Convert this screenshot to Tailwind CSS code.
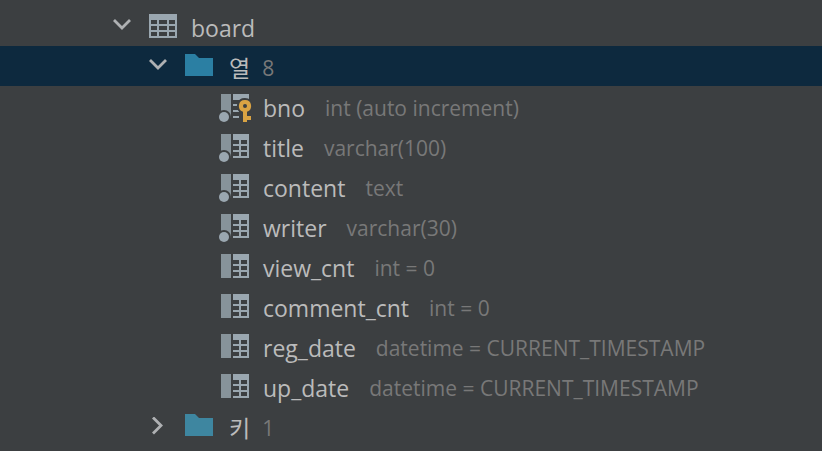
<!DOCTYPE html>
<html lang="ko">
  <head>
    <meta charset="UTF-8" />
    <meta name="viewport" content="width=device-width, initial-scale=1.0" />
    <title>board</title>
    <script src="https://cdn.jsdelivr.net/npm/@tailwindcss/browser@4"></script>
  </head>
  <body class="min-h-screen overflow-hidden bg-[#3c3f41] font-['Open_Sans','Noto_Sans_CJK_KR',sans-serif] text-[23px] leading-10 text-[#bbbbbb]">
    <svg class="hidden">
      <symbol id="down" viewBox="0 0 18 18">
        <path d="M1 3 9 11 17 3" fill="none" stroke="#afb1b3" stroke-width="2.8" />
      </symbol>
      <symbol id="right" viewBox="0 0 18 18">
        <path d="M4 0.500 12 8.500 4 16.500" fill="none" stroke="#afb1b3" stroke-width="2.8" />
      </symbol>
      <symbol id="folder" viewBox="0 0 28 24">
        <path d="M0 0h10l4 4h14v18H0z" fill="currentColor" />
      </symbol>
      <symbol id="column" viewBox="0 0 36 36">
        <path d="M4 6h10v24H4z" fill="#87939a" />
        <path fill-rule="evenodd" d="M16 6h16v24H16v-2h6v-4h-6v-2h6v-4h-6v-2h6v-4h-6zM24 12v4h6v-4zM24 18v4h6v-4zM24 24v4h6v-4z" fill="#9aa7b0" />
      </symbol>
      <symbol id="notnull" viewBox="0 0 36 36">
        <circle cx="7" cy="29" r="7" fill="#3c3f41" />
        <circle cx="7" cy="29" r="5" fill="#9aa7b0" />
      </symbol>
    </svg>

    <ul class="pt-[6px] whitespace-nowrap">
      <li>
        <div class="flex h-10 items-center pl-[113px]">
          <button aria-label="board" class="mr-[18px]"><svg class="size-[18px]"><use href="#down" /></svg></button>
          <svg class="mr-[14px] h-6 w-7" viewBox="0 0 28 24">
            <path fill-rule="evenodd" d="M0 0h28v24H0zM2 6v4h6V6zM10 6v4h8V6zM20 6v4h6V6zM2 12v4h6v-4zM10 12v4h8v-4zM20 12v4h6v-4zM2 18v4h6v-4zM10 18v4h8v-4zM20 18v4h6v-4z" fill="#9aa7b0" />
          </svg>
          <span class="pt-1">board</span>
        </div>
        <ul>
          <li>
            <div class="flex h-10 items-center bg-[#0d293e] pl-[149px]">
              <button aria-label="열" class="mr-[18px]"><svg class="size-[18px]"><use href="#down" /></svg></button>
              <svg class="mr-4 h-6 w-7 text-[#2b7fa3]"><use href="#folder" /></svg>
              <span class="pt-1">열</span>
              <span class="ml-3 pt-1 text-[21px] text-[#787878]">8</span>
            </div>
            <ul class="pl-[217px]">
              <li class="flex h-10 items-center">
                <svg class="mr-[10px] size-9" viewBox="0 0 36 36">
                  <path d="M4 6h10v24H4z" fill="#87939a" />
                  <path d="M16 6h16v6H16zM16 16h6v2h-6zM16 22h6v2h-6zM16 28h6v2h-6z" fill="#9aa7b0" />
                  <use href="#notnull" />
                  <path d="M28 10a8 8 0 0 1 8 8v16H24v-9A8 8 0 0 1 28 10z" fill="#3c3f41" />
                  <path fill-rule="evenodd" d="M28 12a6 6 0 0 1 2 11.700V28h4v4h-4v2h-4V23.700A6 6 0 0 1 28 12zM28 16a2 2 0 1 0 0 4 2 2 0 0 0 0-4z" fill="#d9a343" />
                </svg>
                <span class="pt-1">bno</span>
                <span class="ml-5 pt-1 text-[21px] text-[#787878]">int (auto increment)</span>
              </li>
              <li class="flex h-10 items-center">
                <svg class="mr-[10px] size-9"><use href="#column" /><use href="#notnull" /></svg>
                <span class="pt-1">title</span>
                <span class="ml-5 pt-1 text-[21px] text-[#787878]">varchar(100)</span>
              </li>
              <li class="flex h-10 items-center">
                <svg class="mr-[10px] size-9"><use href="#column" /><use href="#notnull" /></svg>
                <span class="pt-1">content</span>
                <span class="ml-5 pt-1 text-[21px] text-[#787878]">text</span>
              </li>
              <li class="flex h-10 items-center">
                <svg class="mr-[10px] size-9"><use href="#column" /><use href="#notnull" /></svg>
                <span class="pt-1">writer</span>
                <span class="ml-5 pt-1 text-[21px] text-[#787878]">varchar(30)</span>
              </li>
              <li class="flex h-10 items-center">
                <svg class="mr-[10px] size-9"><use href="#column" /></svg>
                <span class="pt-1">view_cnt</span>
                <span class="ml-5 pt-1 text-[21px] text-[#787878]">int = 0</span>
              </li>
              <li class="flex h-10 items-center">
                <svg class="mr-[10px] size-9"><use href="#column" /></svg>
                <span class="pt-1">comment_cnt</span>
                <span class="ml-5 pt-1 text-[21px] text-[#787878]">int = 0</span>
              </li>
              <li class="flex h-10 items-center">
                <svg class="mr-[10px] size-9"><use href="#column" /></svg>
                <span class="pt-1">reg_date</span>
                <span class="ml-5 pt-1 text-[21px] text-[#787878]">datetime = CURRENT_TIMESTAMP</span>
              </li>
              <li class="flex h-10 items-center">
                <svg class="mr-[10px] size-9"><use href="#column" /></svg>
                <span class="pt-1">up_date</span>
                <span class="ml-5 pt-1 text-[21px] text-[#787878]">datetime = CURRENT_TIMESTAMP</span>
              </li>
            </ul>
          </li>
          <li class="flex h-10 items-center pl-[149px]">
            <button aria-label="키" class="mr-[18px]"><svg class="size-[18px]"><use href="#right" /></svg></button>
            <svg class="mr-4 h-6 w-7 text-[#3e86a0]"><use href="#folder" /></svg>
            <span class="pt-1">키</span>
            <span class="ml-3 pt-1 text-[21px] text-[#787878]">1</span>
          </li>
        </ul>
      </li>
    </ul>
  </body>
</html>
